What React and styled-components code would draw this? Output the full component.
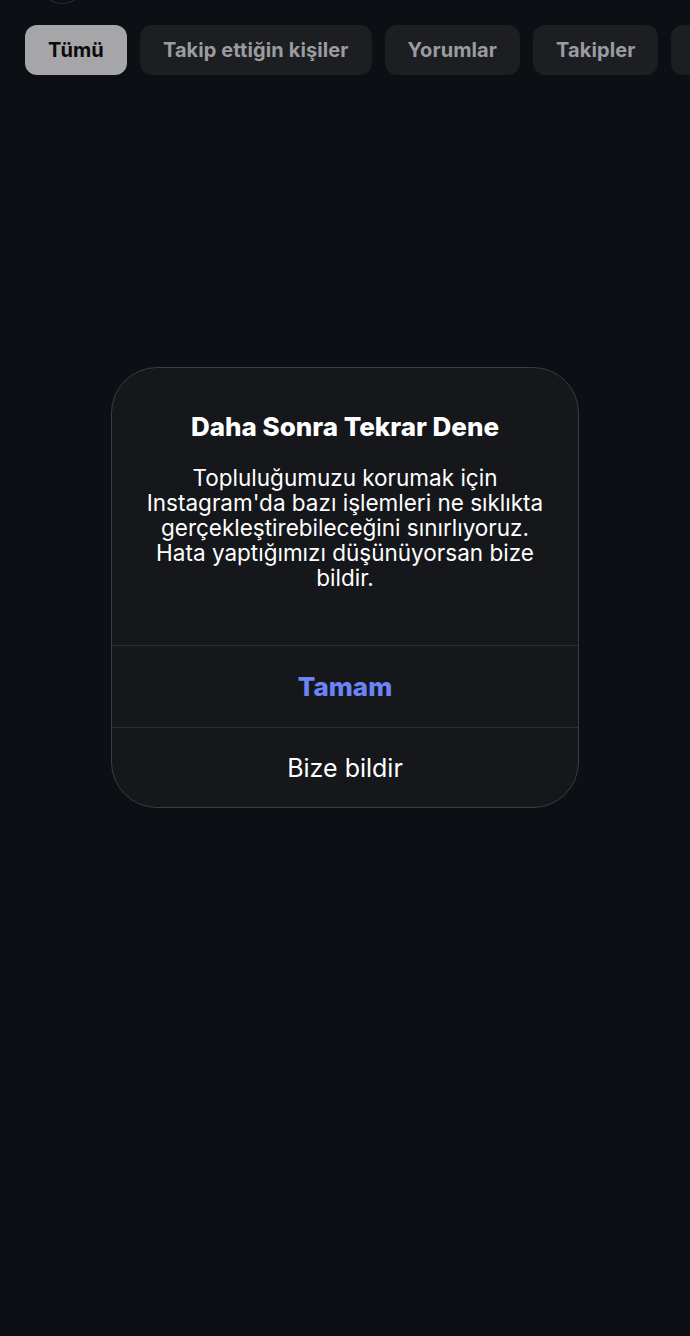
import React from 'react';
import styled, { createGlobalStyle } from 'styled-components';

const GlobalStyle = createGlobalStyle`
  html, body {
    margin: 0;
    padding: 0;
    background: #0c0f14;
  }
  body {
    font-family: Inter, "Noto Sans", "Liberation Sans", sans-serif;
    -webkit-font-smoothing: antialiased;
  }
`;

const Page = styled.div`
  width: 690px;
  min-height: 1336px;
  background: #0c0f14;
  overflow: hidden;
  display: flex;
  flex-direction: column;
`;

const Header = styled.div`
  height: 25px;
  overflow: hidden;
  padding-left: 38px;
`;

const Avatar = styled.div`
  width: 46px;
  height: 46px;
  margin-top: -44px;
  border-radius: 50%;
  border: 1.5px solid #2a2d32;
`;

const Chips = styled.div`
  display: flex;
  gap: 13px;
  padding-left: 25px;
  white-space: nowrap;
  overflow: hidden;
`;

const Chip = styled.div`
  flex: none;
  height: 50px;
  padding: 0 23px;
  display: flex;
  align-items: center;
  border-radius: 12px;
  font-family: Inter, "Liberation Sans", sans-serif;
  font-weight: 700;
  font-size: 20px;
  letter-spacing: 0.1px;
  background: ${p => (p.$active ? '#a6a6a8' : '#1c1e22')};
  color: ${p => (p.$active ? '#0b0b0c' : '#9b9c9f')};
`;

const Dialog = styled.div`
  margin: 292px 0 0 111px;
  width: 468px;
  border-radius: 46px;
  background: #15171b;
  border: 1px solid #3a3c41;
  box-sizing: border-box;
  overflow: hidden;
`;

const Content = styled.div`
  padding: 43px 20px 55px;
  text-align: center;
  color: #ffffff;
`;

const Title = styled.div`
  font-weight: 800;
  font-size: 26px;
  line-height: 32px;
  margin-bottom: 22px;
`;

const Message = styled.div`
  font-size: 22.5px;
  line-height: 25px;
`;

const Action = styled.div`
  height: 81px;
  display: flex;
  align-items: center;
  justify-content: center;
  border-top: 1px solid #2c2e33;
  font-size: ${p => (p.$primary ? '26px' : '25px')};
  font-weight: ${p => (p.$primary ? 800 : 400)};
  color: ${p => (p.$primary ? '#6c84f6' : '#ffffff')};
  &:last-child {
    height: 79px;
  }
`;

export default function App() {
  return (
    <Page>
      <GlobalStyle />
      <Header>
        <Avatar />
      </Header>
      <Chips>
        <Chip $active>Tümü</Chip>
        <Chip>Takip ettiğin kişiler</Chip>
        <Chip>Yorumlar</Chip>
        <Chip>Takipler</Chip>
        <Chip>Beğeniler</Chip>
      </Chips>
      <Dialog>
        <Content>
          <Title>Daha Sonra Tekrar Dene</Title>
          <Message>
            Topluluğumuzu korumak için
            <br />
            Instagram'da bazı işlemleri ne sıklıkta
            <br />
            gerçekleştirebileceğini sınırlıyoruz.
            <br />
            Hata yaptığımızı düşünüyorsan bize
            <br />
            bildir.
          </Message>
        </Content>
        <Action $primary>Tamam</Action>
        <Action>Bize bildir</Action>
      </Dialog>
    </Page>
  );
}
